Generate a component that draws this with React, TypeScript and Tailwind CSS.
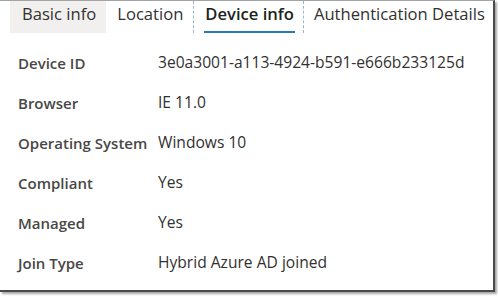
import React from 'react';

const rows: [string, string][] = [
  ['Device ID', '3e0a3001-a113-4924-b591-e666b233125d'],
  ['Browser', 'IE 11.0'],
  ['Operating System', 'Windows 10'],
  ['Compliant', 'Yes'],
  ['Managed', 'Yes'],
  ['Join Type', 'Hybrid Azure AD joined'],
];

export default function App() {
  return (
    <div className="w-[498px] h-[296px] bg-white font-['Open_Sans',sans-serif] text-[#323130]">
      <div className="w-[495px] h-[292px] border-t border-t-[#a3a3a3] border-r-2 border-b-2 border-r-[#4a4a4a] border-b-[#4a4a4a] shadow-[2px_2px_2px_rgba(0,0,0,0.35)]">
        {/* Tabs */}
        <div className="flex h-[32px] pl-[10px] text-[16.6px] whitespace-nowrap">
          <div className="flex shrink-0 items-center bg-[#f1f0ef] pl-[12px] pr-[10px] pb-[5px]">Basic info</div>
          <div className="flex shrink-0 items-center pl-[11px] pr-[10px] pb-[5px]">Location</div>
          <div className="w-0 shrink-0 border-l border-dashed border-l-[#9fb7c9]" />
          <div className="relative flex shrink-0 items-center pl-[11px] pr-[9px] pb-[5px] font-semibold text-[#201f1e]">
            Device info
            <span className="absolute left-[10px] right-[8px] bottom-[0px] h-[2px] bg-[#2b79b5]" />
          </div>
          <div className="w-0 shrink-0 border-l border-dashed border-l-[#9fb7c9]" />
          <div className="flex shrink-0 items-center pl-[10px] pb-[5px]">Authentication Details</div>
        </div>

        {/* Details */}
        <div className="pt-[10px] pl-[18px]">
          {rows.map(([label, value]) => (
            <div key={label} className="flex h-[40px] items-center whitespace-nowrap">
              <div className="w-[140px] text-[15px] font-semibold text-[#484746]">{label}</div>
              <div className="text-[15.6px]">{value}</div>
            </div>
          ))}
        </div>
      </div>
    </div>
  );
}
